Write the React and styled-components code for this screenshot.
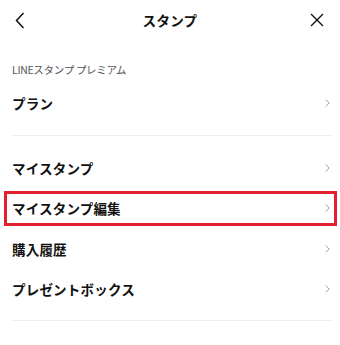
import React from "react";
import styled, { createGlobalStyle } from "styled-components";

const GlobalStyle = createGlobalStyle`
  html, body {
    margin: 0;
    padding: 0;
    background: #ffffff;
  }
  body {
    font-family: "Noto Sans CJK JP", "Noto Sans", sans-serif;
    color: #111111;
  }
`;

const Page = styled.div`
  width: 340px;
  height: 345px;
  background: #ffffff;
  overflow: hidden;
`;

const Header = styled.header`
  height: 40px;
  display: grid;
  grid-template-columns: 40px 1fr 40px;
  align-items: center;
`;

const IconButton = styled.button`
  width: 40px;
  height: 40px;
  padding: ${(p) => (p.$end ? "0 6px 0 0" : "0")};
  border: none;
  background: none;
  display: flex;
  align-items: center;
  justify-content: center;
  color: #111111;
`;

const Title = styled.h1`
  margin: 0;
  text-align: center;
  font-size: 13.5px;
  font-weight: 700;
  letter-spacing: 0.3px;
`;

const Section = styled.section`
  padding: ${(p) => (p.$first ? "12px 0 12px" : "12px 0 11px")};
  border-bottom: 1px solid #efefef;
  margin: 0 8px 0 12px;
`;

const SectionLabel = styled.div`
  font-size: 10.5px;
  color: #555555;
  height: 31px;
  line-height: 12px;
  padding-top: 12px;
  box-sizing: border-box;
  letter-spacing: -0.3px;
`;

const Row = styled.div`
  position: relative;
  height: 40.3px;
  padding-bottom: 1px;
  box-sizing: border-box;
  display: flex;
  align-items: center;
  justify-content: space-between;
  font-size: 13.5px;
  font-weight: 700;
  letter-spacing: 0.2px;

  ${(p) =>
    p.$highlight &&
    `
    &::after {
      content: "";
      position: absolute;
      left: -8px;
      right: -5px;
      top: 2px;
      bottom: 3px;
      border: 3px solid #e3202d;
      pointer-events: none;
    }
  `}
`;

const Chevron = styled.svg`
  margin-right: 2px;
  flex-shrink: 0;
`;

const items = [
  { label: "マイスタンプ" },
  { label: "マイスタンプ編集", highlight: true },
  { label: "購入履歴" },
  { label: "プレゼントボックス" },
];

const RightArrow = () => (
  <Chevron width="5" height="8" viewBox="0 0 5 8">
    <path d="M0.8 0.6 L4.2 4 L0.8 7.4" fill="none" stroke="#9a9a9a" strokeWidth="1" />
  </Chevron>
);

export default function App() {
  return (
    <Page>
      <GlobalStyle />
      <Header>
        <IconButton aria-label="back">
          <svg width="10" height="17" viewBox="0 0 10 17">
            <path d="M8.5 1 L1.5 8.5 L8.5 16" fill="none" stroke="#111" strokeWidth="1.5" />
          </svg>
        </IconButton>
        <Title>スタンプ</Title>
        <IconButton aria-label="close" $end>
          <svg width="14" height="14" viewBox="0 0 14 14">
            <path d="M1 1 L13 13 M13 1 L1 13" fill="none" stroke="#111" strokeWidth="1.4" />
          </svg>
        </IconButton>
      </Header>
      <Section $first>
        <SectionLabel>LINEスタンプ プレミアム</SectionLabel>
        <Row>
          <span>プラン</span>
          <RightArrow />
        </Row>
      </Section>
      <Section>
        {items.map((it) => (
          <Row key={it.label} $highlight={it.highlight}>
            <span>{it.label}</span>
            <RightArrow />
          </Row>
        ))}
      </Section>
    </Page>
  );
}
